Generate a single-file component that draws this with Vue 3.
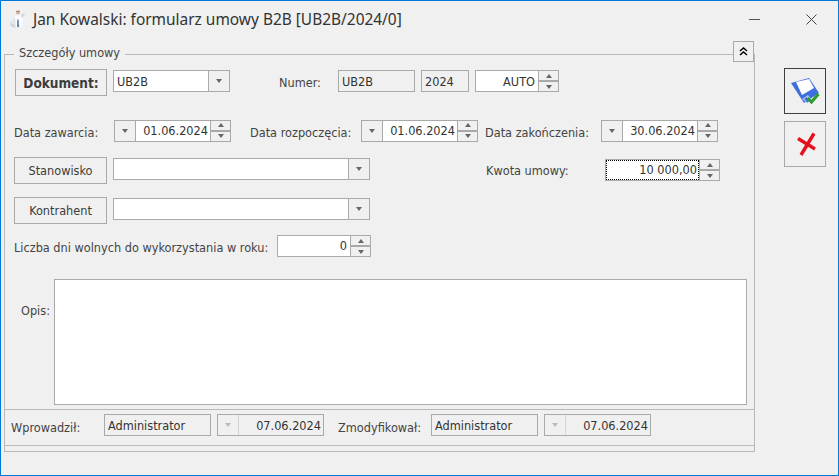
<script setup>
</script>

<template>
  <div class="window">
    <header class="titlebar">
      <svg class="appicon" width="20" height="20" viewBox="0 0 20 20">
        <path d="M0 13l6-6 2 9-3 3-5-3z" fill="#e2e5eb" />
        <path d="M.5 14.500l4 2.500M.5 16l4 2.500" stroke="#bcc0c9" stroke-width="0.700" fill="none" />
        <path d="M5 7l6-1 2 2-.5 10H6z" fill="#f9fafb" />
        <path d="M11 6l3-2 1 1-3 4z" fill="#d2d4d9" />
        <circle cx="8" cy="3.500" r="2" fill="#d9b3a0" />
        <path d="M6 2.200l3.500-.7.400 1.300-3.800.5z" fill="#a08a80" />
        <path d="M7.200 10.500h1.400l.6 7.500H7z" fill="#5f84b8" />
      </svg>
      <h1 class="title">Jan Kowalski: formularz umowy B2B [UB2B/2024/0]</h1>
      <svg class="winbtn min" width="11" height="11" viewBox="0 0 11 11"><path d="M0 5.500h11" stroke="#555" fill="none" /></svg>
      <svg class="winbtn close" width="11" height="11" viewBox="0 0 11 11"><path d="M.5.500l10 10M10.500.500l-10 10" stroke="#444" fill="none" /></svg>
    </header>

    <main class="content">
      <fieldset class="group">
        <legend class="legend">Szczegóły umowy</legend>
        <button class="collapse" type="button" aria-label="Zwiń">
          <svg width="9" height="9" viewBox="0 0 9 9"><path d="M1 4l3.500-3L8 4M1 8l3.500-3L8 8" stroke="#000" stroke-width="1.500" fill="none" /></svg>
        </button>

        <div class="form">
          <div class="row row-doc">
            <button class="btn btn-doc" type="button">Dokument:</button>
            <div class="box combo w-doc"><span class="txt">UB2B</span><span class="drop"><i class="tri" /></span></div>
            <label class="lbl numer">Numer:</label>
            <div class="box ro w-num1"><span class="txt">UB2B</span></div>
            <div class="box ro w-num2"><span class="txt">2024</span></div>
            <div class="box spin w-num3"><span class="txt right">AUTO</span><span class="updown"><i class="up" /><i class="dn" /></span></div>
          </div>

          <div class="row row-dates">
            <label class="lbl l-zaw">Data zawarcia:</label>
            <div class="box date"><span class="drop left"><i class="tri" /></span><span class="txt right">01.06.2024</span><span class="updown"><i class="up" /><i class="dn" /></span></div>
            <label class="lbl l-roz">Data rozpoczęcia:</label>
            <div class="box date"><span class="drop left"><i class="tri" /></span><span class="txt right">01.06.2024</span><span class="updown"><i class="up" /><i class="dn" /></span></div>
            <label class="lbl l-zak">Data zakończenia:</label>
            <div class="box date"><span class="drop left"><i class="tri" /></span><span class="txt right">30.06.2024</span><span class="updown"><i class="up" /><i class="dn" /></span></div>
          </div>

          <div class="row row-st">
            <button class="btn btn-side" type="button">Stanowisko</button>
            <div class="box combo w-wide"><span class="txt" /><span class="drop"><i class="tri" /></span></div>
            <label class="lbl l-kw">Kwota umowy:</label>
            <div class="box spin w-kw"><span class="txt right focus">10 000,00</span><span class="updown"><i class="up" /><i class="dn" /></span></div>
          </div>

          <div class="row row-ko">
            <button class="btn btn-side" type="button">Kontrahent</button>
            <div class="box combo w-wide"><span class="txt" /><span class="drop"><i class="tri" /></span></div>
          </div>

          <div class="row row-days">
            <label class="lbl l-days">Liczba dni wolnych do wykorzystania w roku:</label>
            <div class="box spin w-days"><span class="txt right">0</span><span class="updown"><i class="up" /><i class="dn" /></span></div>
          </div>

          <div class="row row-opis">
            <label class="lbl l-opis">Opis:</label>
            <div class="memo" />
          </div>
        </div>

        <footer class="audit">
          <label class="lbl l-wpr">Wprowadził:</label>
          <div class="box ro w-user"><span class="txt">Administrator</span></div>
          <div class="box ro w-user date-ro"><span class="drop left off"><i class="tri" /></span><span class="txt right">07.06.2024</span></div>
          <label class="lbl l-zmo">Zmodyfikował:</label>
          <div class="box ro w-user"><span class="txt">Administrator</span></div>
          <div class="box ro w-user date-ro"><span class="drop left off"><i class="tri" /></span><span class="txt right">07.06.2024</span></div>
        </footer>
      </fieldset>

      <aside class="actions">
        <button class="action default" type="button" aria-label="Zapisz">
          <svg width="34" height="34" viewBox="0 0 34 34">
            <path d="M3 9L21 4l10 15-15 10z" fill="#3f6fdc" />
            <path d="M8 8l13-3 5 9-12 7z" fill="#fff" />
            <path d="M14 25l6-4 4 5-5 3z" fill="#a9bfee" />
            <path d="M16.500 24.500l2-1.300 2.500 4-2 1.300z" fill="#3f6fdc" />
            <path d="M19.500 24l4 4 7-8" stroke="#2a9d2a" stroke-width="3" fill="none" />
          </svg>
        </button>
        <button class="action" type="button" aria-label="Anuluj">
          <svg width="26" height="28" viewBox="0 0 26 28">
            <path d="M22 3.500L9 25" stroke="#e6101a" stroke-width="3.400" fill="none" />
            <path d="M6 8.500l17 10.500" stroke="#e6101a" stroke-width="3.400" fill="none" />
          </svg>
        </button>
      </aside>
    </main>
  </div>
</template>

<style>
html, body { margin: 0; background: #f0f0f0; }
</style>

<style scoped>
.window {
  box-sizing: border-box;
  width: 839px;
  height: 476px;
  border: 1px solid #0078d7;
  background: #f0f0f0;
  font: 12.6px "DejaVu Sans Condensed", "DejaVu Sans", sans-serif;
  font-stretch: condensed;
  color: #3c3c3c;
  overflow: hidden;
  display: flex;
  flex-direction: column;
}
.titlebar {
  display: flex;
  align-items: center;
  height: 36px;
  padding-left: 9px;
  flex: none;
}
.appicon { flex: none; }
.title {
  margin: 0 0 0 3px;
  font: 400 15.45px "Noto Sans", "Open Sans", sans-serif;
  color: #333;
  flex: 1;
  white-space: nowrap;
}
.winbtn { flex: none; }
.min { margin-right: 46px; }
.close { margin-right: 21px; }

.content { display: flex; flex: 1; align-items: flex-start; padding-left: 3px; }

.group {
  position: relative;
  box-sizing: border-box;
  width: 751px;
  height: 406px;
  margin: 9px 0 0 0;
  padding: 0;
  border: 1px solid #b9b9b9;
  min-width: 0;
}
.legend { margin-left: 9px; padding: 0 5px 2px; line-height: 14px; color: #444; }
.collapse {
  position: absolute;
  right: 0;
  top: -21px;
  width: 21px;
  height: 21px;
  padding: 0;
  border: 1px solid #a9a9a9;
  background: #f0f0f0;
  display: flex;
  align-items: center;
  justify-content: center;
}

.form { display: flex; flex-direction: column; padding: 7px 0 0 9px; height: 347px; box-sizing: border-box; }
.row { display: flex; align-items: center; flex: none; }
.row-doc { height: 27px; }
.row-dates { height: 23px; margin-top: 23px; }
.row-st { height: 27px; margin-top: 15px; }
.row-ko { height: 27px; margin-top: 13px; }
.row-days { height: 22px; margin-top: 11px; }
.row-opis { margin-top: 22px; align-items: flex-start; }

.lbl { white-space: nowrap; color: #444; flex: none; }
.row-dates .lbl { margin-top: 4px; }
.row-days .lbl { margin-top: 2px; }
.btn {
  box-sizing: border-box;
  height: 27px;
  padding: 0;
  border: 1px solid #a9a9a9;
  background: #f0f0f0;
  font: inherit;
  font-stretch: condensed;
  color: #3c3c3c;
  flex: none;
}
.btn-doc { width: 92px; margin-left: 1px; font-weight: 700; font-size: 13.5px; }
.btn-side { width: 93px; }

.box {
  box-sizing: border-box;
  display: flex;
  height: 22px;
  border: 1px solid #a9a9a9;
  background: #fff;
  flex: none;
  color: #333;
}
.row-doc .box, .w-wide { margin-bottom: 3px; }
.ro { background: #f0f0f0; }
.txt { flex: 1; min-width: 0; padding: 0 3px; line-height: 20px; white-space: nowrap; }
.right { text-align: right; }
.row-doc .txt { line-height: 22px; }
.date .txt, .date-ro .txt { padding-right: 2px; }
.audit .txt { line-height: 21px; }
.drop {
  flex: none;
  width: 20px;
  background: #f0f0f0;
  border-left: 1px solid #a9a9a9;
  display: flex;
  align-items: center;
  justify-content: center;
}
.drop.left { border-left: 0; border-right: 1px solid #a9a9a9; }
.drop.off { border-right-color: #d5d5d5; }
.tri { width: 0; height: 0; border: 3.500px solid transparent; border-top: 4px solid #666; border-bottom: 0; }
.off .tri { border-top-color: #bbb; }
.updown {
  flex: none;
  width: 19px;
  display: flex;
  flex-direction: column;
  background: #f0f0f0;
  border-left: 1px solid #a9a9a9;
}
.updown i {
  flex: 1;
  display: flex;
  align-items: center;
  justify-content: center;
}
.up { border-bottom: 1px solid #a9a9a9; }
.dn { border-top: 1px solid #a9a9a9; }
.up::before, .dn::before { content: ""; width: 0; height: 0; border: 3.500px solid transparent; }
.up::before { border-top: 0; border-bottom: 4px solid #666; }
.dn::before { border-bottom: 0; border-top: 4px solid #666; }

.w-doc { width: 117px; margin-left: 6px; }
.numer { margin-left: 49px; width: 59px; }
.w-num1 { width: 77px; }
.w-num2 { width: 48px; margin-left: 6px; }
.w-num3 { width: 84px; margin-left: 6px; }

.date { width: 117px; }
.l-zaw { width: 100px; }
.l-roz { width: 111px; margin-left: 19px; }
.l-zak { width: 116px; margin-left: 7px; }

.w-wide { width: 257px; margin-left: 6px; }
.l-kw { margin-left: 116px; width: 119px; }
.w-kw { width: 115px; margin-bottom: 1px; }
.focus { outline: 1px dotted #000; outline-offset: -1px; padding-right: 2px; }

.l-days { width: 263px; }
.w-days { width: 94px; }

.l-opis { width: 33px; margin-left: 7px; margin-top: 24px; }
.memo {
  box-sizing: border-box;
  width: 693px;
  height: 126px;
  background: #fff;
  border: 1px solid #a9a9a9;
}

.audit {
  box-sizing: border-box;
  height: 37px;
  padding: 0 0 6px 6px;
  border-top: 1px solid #b9b9b9;
  border-bottom: 1px solid #b9b9b9;
  display: flex;
  align-items: center;
}
.audit .lbl { margin-top: 6px; }
.w-user { width: 107px; }
.date-ro { margin-left: 6px; }
.l-wpr { width: 93px; }
.audit .l-zmo { width: 93px; margin-left: 14px; }

.actions {
  display: flex;
  flex-direction: column;
  gap: 7px;
  margin: 31px 0 0 29px;
}
.action {
  box-sizing: border-box;
  width: 42px;
  height: 46px;
  padding: 0;
  border: 1px solid #a9a9a9;
  background: #f0f0f0;
  display: flex;
  align-items: center;
  justify-content: center;
}
.action.default { border-color: #404040; }
</style>
